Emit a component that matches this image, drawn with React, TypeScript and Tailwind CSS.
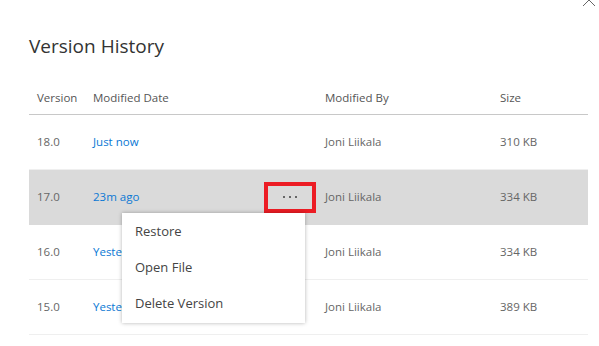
import React from "react";

type Version = {
  id: string;
  modified: string;
  by: string;
  size: string;
};

const versions: Version[] = [
  { id: "18.0", modified: "Just now", by: "Joni Liikala", size: "310 KB" },
  { id: "17.0", modified: "23m ago", by: "Joni Liikala", size: "334 KB" },
  { id: "16.0", modified: "Yesterday", by: "Joni Liikala", size: "334 KB" },
  { id: "15.0", modified: "Yesterday", by: "Joni Liikala", size: "389 KB" },
];

const menuItems = ["Restore", "Open File", "Delete Version"];

const font = { fontFamily: '"Segoe UI", "Open Sans", "Noto Sans", sans-serif' };

export default function App() {
  const selected = "17.0";

  return (
    <div className="relative h-[346px] w-[599px] overflow-hidden bg-white" style={font}>
      {/* close */}
      <button className="absolute right-[3px] top-[-7px] text-[#666]" aria-label="Close">
        <svg width="14" height="14" viewBox="0 0 14 14" fill="none" stroke="currentColor" strokeWidth="1">
          <path d="M1 1l12 12M13 1L1 13" />
        </svg>
      </button>

      <div className="pl-[29px] pr-[11px] pt-[32px]">
        <h1 className="text-[19px] leading-[28px] text-[#333]">Version History</h1>

        <div className="mt-[22px] grid h-[33px] grid-cols-[64px_232px_175px_1fr] items-center border-b border-[#c8c8c8] text-[11.5px] text-[#555]">
          <div className="pl-[8px]">Version</div>
          <div>Modified Date</div>
          <div>Modified By</div>
          <div>Size</div>
        </div>

        {versions.map((v) => {
          const active = v.id === selected;
          return (
            <div
              key={v.id}
              className={`grid h-[55px] grid-cols-[64px_232px_175px_1fr] items-center border-b text-[11.5px] text-[#666] ${
                active ? "border-[#dadada] bg-[#dadada]" : "border-[#efefef]"
              }`}
            >
              <div className="pl-[8px]">{v.id}</div>
              <div className="flex items-center justify-between pr-[9px]">
                <span className="text-[#0a78d4]">{v.modified}</span>
                {active && (
                  <button className="flex h-[31px] w-[52px] items-center justify-center gap-[4px] border-[4px] border-[#ec1c24]">
                    <span className="h-[2px] w-[2px] bg-[#666]" />
                    <span className="h-[2px] w-[2px] bg-[#666]" />
                    <span className="h-[2px] w-[2px] bg-[#666]" />
                  </button>
                )}
              </div>
              <div>{v.by}</div>
              <div>{v.size}</div>
            </div>
          );
        })}
      </div>

      {/* context menu */}
      <div className="absolute left-[122px] top-[213px] w-[183px] bg-white py-[1px] shadow-[0_0_4px_rgba(0,0,0,0.3)]">
        {menuItems.map((m) => (
          <div key={m} className="flex h-[36px] items-center pl-[13px] text-[13px] text-[#444]">
            {m}
          </div>
        ))}
      </div>
    </div>
  );
}
